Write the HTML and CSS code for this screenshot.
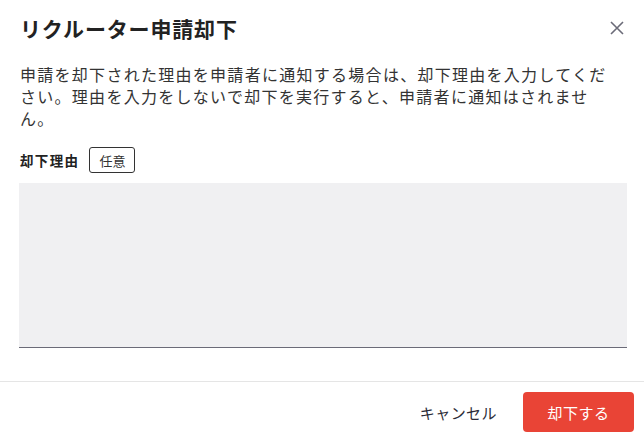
FILE: index.html
```
<!DOCTYPE html>
<html lang="ja">
<head>
<meta charset="utf-8">
<link rel="stylesheet" href="styles.css">
</head>
<body>
<div class="dialog">
  <div class="header">
    <h1 class="title">リクルーター申請却下</h1>
    <button class="close" aria-label="閉じる">
      <svg width="14" height="14" viewBox="0 0 14 14"><path d="M1 1 L13 13 M13 1 L1 13" stroke="#6b6b78" stroke-width="1.6" fill="none"/></svg>
    </button>
  </div>
  <div class="body">
    <p class="desc">申請を却下された理由を申請者に通知する場合は、却下理由を入力してください。理由を入力をしないで却下を実行すると、申請者に通知はされません。</p>
    <div class="field">
      <div class="label-row">
        <span class="label">却下理由</span>
        <span class="tag">任意</span>
      </div>
      <textarea class="input"></textarea>
    </div>
  </div>
  <div class="footer">
    <button class="btn-cancel">キャンセル</button>
    <button class="btn-reject">却下する</button>
  </div>
</div>
</body>
</html>
```
FILE: styles.css
```
* { box-sizing: border-box; }
html, body { margin: 0; padding: 0; background: #fff; }
body {
  font-family: "Noto Sans CJK JP", "Noto Sans", sans-serif;
  color: #333;
}
.dialog { width: 644px; height: 436px; }
.header {
  height: 56px;
  display: flex;
  align-items: center;
  justify-content: space-between;
  padding: 0 20px 0 20px;
}
.title {
  margin: 0;
  font-size: 21px;
  font-weight: 700;
  letter-spacing: 0.04em;
  color: #222;
  line-height: 1;
}
.close {
  border: 0;
  background: none;
  padding: 0;
  margin-right: 0;
  width: 14px;
  height: 14px;
  display: flex;
  cursor: pointer;
}
.body { padding: 7px 20px 33px 19px; }
.desc {
  margin: 0 0 0 1px;
  width: 596px;
  font-size: 16px;
  line-height: 22px;
  letter-spacing: 0.08em;
  color: #333;
}
.field { margin-top: 18px; }
.label-row {
  display: flex;
  align-items: center;
  gap: 10px;
  height: 26px;
  padding-left: 1px;
}
.label {
  font-size: 13.5px;
  font-weight: 700;
  letter-spacing: 0.1em;
  color: #222;
}
.tag {
  height: 26px;
  width: 46px;
  display: flex;
  align-items: center;
  justify-content: center;
  border: 1px solid #333;
  border-radius: 3px;
  font-size: 13px;
  color: #333;
}
.input {
  display: block;
  margin-top: 10px;
  width: 608px;
  height: 165px;
  background: #f0f0f2;
  border: 0;
  border-bottom: 1px solid #6b6b78;
  resize: none;
  outline: none;
}
.footer {
  border-top: 1px solid #e5e5e5;
  display: flex;
  justify-content: flex-end;
  align-items: center;
  gap: 10px;
  padding: 10px 10px 0 0;
}
.btn-cancel {
  border: 0;
  background: none;
  font-family: inherit;
  font-size: 15px;
  letter-spacing: 0.03em;
  color: #2c2c38;
  height: 40px;
  padding: 0 16px;
}
.btn-reject {
  border: 0;
  background: #e94436;
  color: #fff;
  font-family: inherit;
  font-size: 15px;
  letter-spacing: 0.03em;
  width: 111px;
  height: 40px;
  border-radius: 4px;
}
```
